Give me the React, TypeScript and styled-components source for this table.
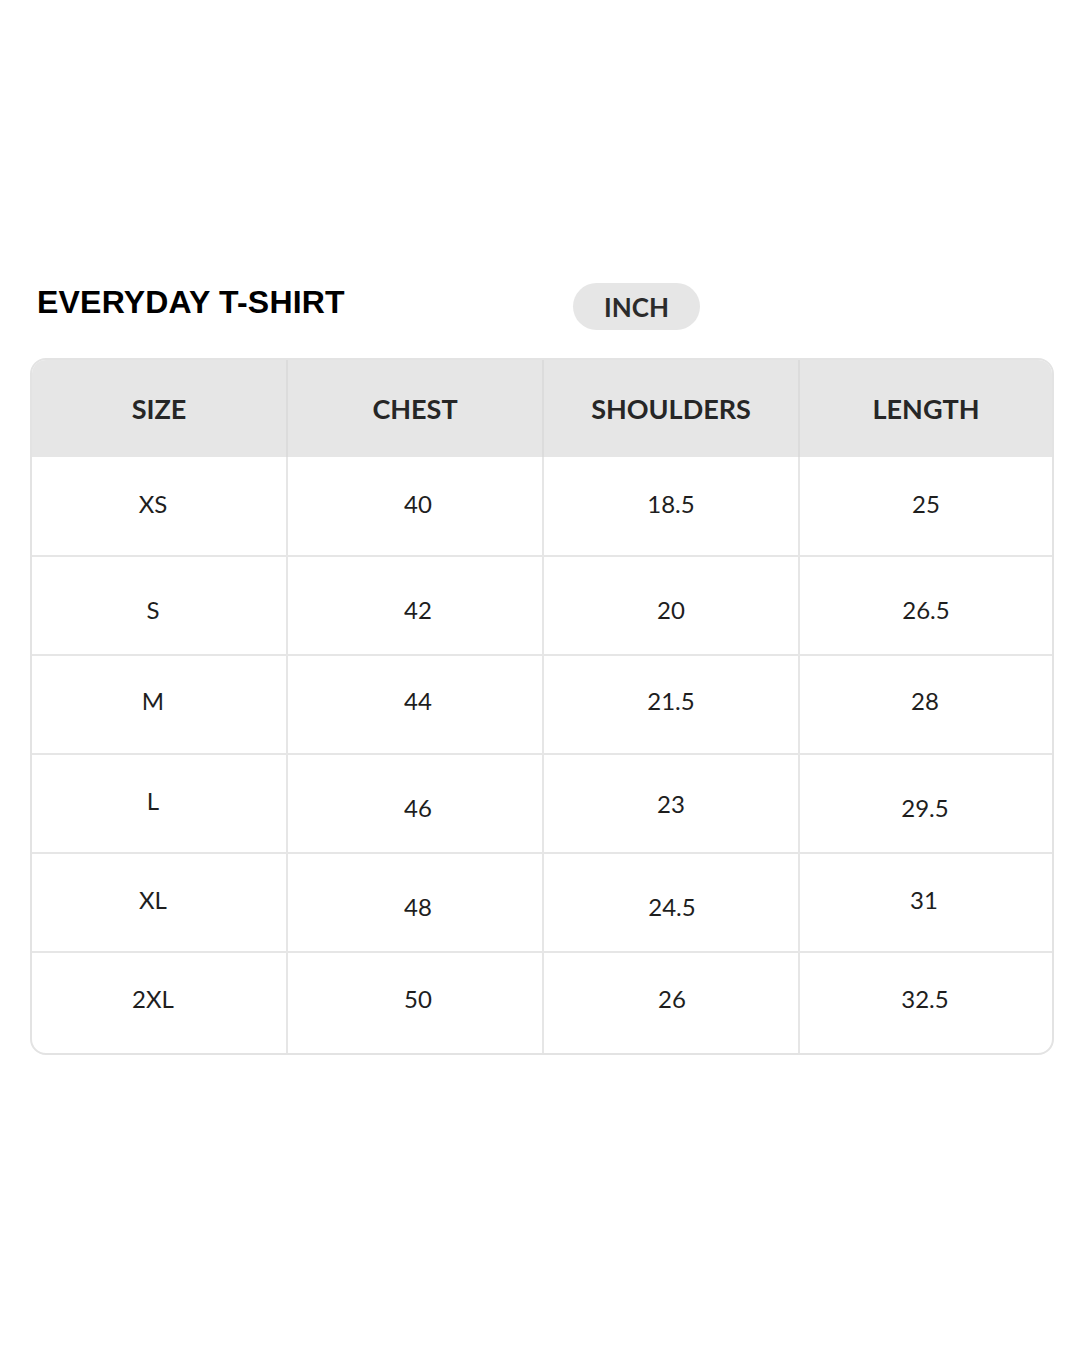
import React from "react";
import styled, { createGlobalStyle } from "styled-components";

const GlobalStyle = createGlobalStyle`
    html, body {
        margin: 0;
        padding: 0;
        background: #ffffff;
    }
`;

const Page = styled.div`
    width: 1080px;
    height: 1350px;
    box-sizing: border-box;
    padding: 283px 26px 0 30px;
    background: #ffffff;
`;

const TopBar = styled.div`
    display: grid;
    grid-template-columns: 543px auto;
    align-items: flex-start;
`;

const Title = styled.h1`
    margin: 3px 0 0 7px;
    font-family: "Liberation Sans", Arial, sans-serif;
    font-size: 32px;
    line-height: 32px;
    font-weight: 700;
    letter-spacing: 0.2px;
    color: #000000;
`;

const UnitPill = styled.div`
    justify-self: start;
    width: 127px;
    height: 47px;
    border-radius: 24px;
    background: #e6e6e6;
    display: flex;
    align-items: center;
    justify-content: center;
    font-family: Lato, "Open Sans", sans-serif;
    font-size: 26px;
    font-weight: 700;
    color: #2b2b2b;
`;

const Table = styled.div`
    margin-top: 28px;
    width: 1024px;
    box-sizing: border-box;
    border: 2px solid #e3e3e3;
    border-radius: 16px;
    overflow: hidden;
    display: grid;
    grid-template-columns: 256px 256px 256px 252px;
    grid-template-rows: 97px 98px repeat(4, 99px) 102px;
`;

const HeadCell = styled.div<{ $last?: boolean }>`
    background: #e6e6e6;
    border-right: ${(p) => (p.$last ? "none" : "2px solid #dcdcdc")};
    display: flex;
    align-items: center;
    justify-content: center;
    font-family: Lato, "Open Sans", sans-serif;
    font-size: 27px;
    font-weight: 700;
    color: #262626;
`;

const Cell = styled.div<{ $last?: boolean; $top?: boolean }>`
    border-right: ${(p) => (p.$last ? "none" : "2px solid #e6e6e6")};
    border-top: ${(p) => (p.$top ? "none" : "2px solid #e6e6e6")};
    display: flex;
    align-items: center;
    justify-content: center;
    font-family: Lato, "Open Sans", sans-serif;
    font-size: 24px;
    font-weight: 400;
    color: #1e1e1e;
`;

const Value = styled.span<{ $dx: number; $dy: number }>`
    transform: translate(${(p) => p.$dx}px, ${(p) => p.$dy}px);
`;

const headers = ["SIZE", "CHEST", "SHOULDERS", "LENGTH"];

// [text, dx, dy] per cell, the source chart isn't perfectly centred
const rows: [string, number, number][][] = [
    [["XS", -6, -3], ["40", 3, -3], ["18.5", 0, -3], ["25", 0, -3]],
    [["S", -6, 4], ["42", 3, 4], ["20", 0, 4], ["26.5", 0, 4]],
    [["M", -6, -4], ["44", 3, -4], ["21.5", 0, -4], ["28", -1, -4]],
    [["L", -6, -3], ["46", 3, 4], ["23", 0, 0], ["29.5", -1, 4]],
    [["XL", -6, -3], ["48", 3, 4], ["24.5", 1, 4], ["31", -2, -3]],
    [["2XL", -6, -5], ["50", 3, -5], ["26", 1, -5], ["32.5", -1, -5]],
];

export default function App() {
    return (
        <>
            <GlobalStyle />
            <Page>
                <TopBar>
                    <Title>EVERYDAY T-SHIRT</Title>
                    <UnitPill>INCH</UnitPill>
                </TopBar>
                <Table>
                    {headers.map((h, i) => (
                        <HeadCell key={h} $last={i === headers.length - 1}>
                            {h}
                        </HeadCell>
                    ))}
                    {rows.map((row, r) =>
                        row.map(([text, dx, dy], c) => (
                            <Cell
                                key={`${r}-${c}`}
                                $last={c === row.length - 1}
                                $top={r === 0}
                            >
                                <Value $dx={dx} $dy={dy}>
                                    {text}
                                </Value>
                            </Cell>
                        ))
                    )}
                </Table>
            </Page>
        </>
    );
}
